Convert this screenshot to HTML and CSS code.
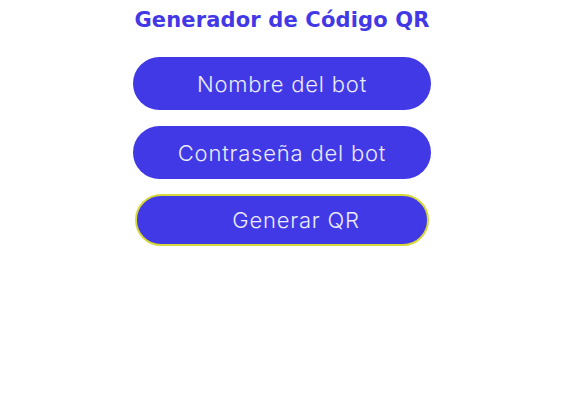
FILE: index.html
```html
<!DOCTYPE html>
<html lang="es">
<head>
<meta charset="utf-8">
<title>Generador de Código QR</title>
<link rel="stylesheet" href="styles.css">
</head>
<body>
<main class="card">
  <h1 class="title">Generador de Código QR</h1>
  <form class="form">
    <input class="field" type="text" placeholder="Nombre del bot">
    <input class="field" type="password" placeholder="Contraseña del bot">
    <button class="submit" type="button">Generar QR</button>
  </form>
</main>
</body>
</html>
```

FILE: styles.css
```css
html, body {
  margin: 0;
  padding: 0;
  background: #ffffff;
}
.card {
  display: flex;
  flex-direction: column;
  align-items: center;
  padding-top: 8px;
  padding-right: 1px;
}
.title {
  margin: 0;
  font-family: "DejaVu Sans", sans-serif;
  font-weight: bold;
  font-size: 21px;
  line-height: 24px;
  color: #4338e6;
  letter-spacing: 0.15px;
}
.form {
  display: flex;
  flex-direction: column;
  align-items: center;
  gap: 16px;
  margin-top: 25px;
}
.field {
  box-sizing: border-box;
  width: 298px;
  height: 53px;
  border: none;
  border-radius: 27px;
  background: #4139e5;
  color: #ffffff;
  text-align: center;
  font-family: Inter, sans-serif;
  font-weight: 300;
  font-size: 22px;
  letter-spacing: 0.8px;
  outline: none;
}
.field::placeholder {
  color: #ecebff;
  opacity: 1;
}
.submit {
  box-sizing: border-box;
  width: 294px;
  height: 52px;
  margin-top: -1px;
  border: 2px solid #d6d93a;
  border-radius: 26px;
  background: #4139e5;
  color: #ecebff;
  font-family: Inter, sans-serif;
  font-weight: 300;
  font-size: 22px;
  letter-spacing: 0.8px;
  padding-left: 34px;
}
```
